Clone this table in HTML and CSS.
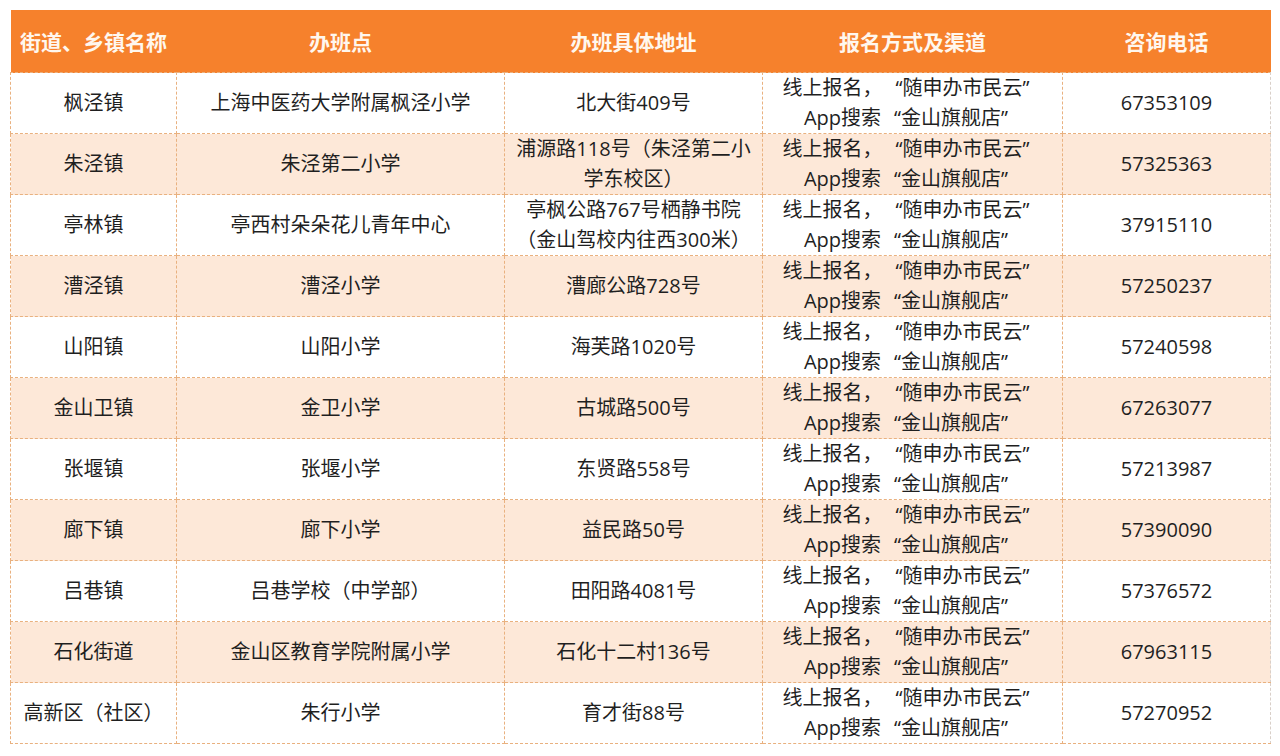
FILE: index.html
```html
<!DOCTYPE html>
<html lang="zh">
<head>
<meta charset="utf-8">
<link rel="stylesheet" href="styles.css">
</head>
<body>
<table class="tbl">
  <colgroup>
    <col class="c1"><col class="c2"><col class="c3"><col class="c4"><col class="c5">
  </colgroup>
  <thead>
    <tr><th>街道、乡镇名称</th><th>办班点</th><th>办班具体地址</th><th>报名方式及渠道</th><th>咨询电话</th></tr>
  </thead>
  <tbody>
    <tr><td>枫泾镇</td><td>上海中医药大学附属枫泾小学</td><td>北大街409号</td><td>线上报名，<span class="ql">“</span>随申办市民云<span class="qr">”</span><br>App搜索<span class="ql">“</span>金山旗舰店<span class="qr">”</span></td><td>67353109</td></tr>
    <tr class="alt"><td>朱泾镇</td><td>朱泾第二小学</td><td>浦源路118号（朱泾第二小<br>学东校区）</td><td>线上报名，<span class="ql">“</span>随申办市民云<span class="qr">”</span><br>App搜索<span class="ql">“</span>金山旗舰店<span class="qr">”</span></td><td>57325363</td></tr>
    <tr><td>亭林镇</td><td>亭西村朵朵花儿青年中心</td><td>亭枫公路767号栖静书院<br>（金山驾校内往西300米）</td><td>线上报名，<span class="ql">“</span>随申办市民云<span class="qr">”</span><br>App搜索<span class="ql">“</span>金山旗舰店<span class="qr">”</span></td><td>37915110</td></tr>
    <tr class="alt"><td>漕泾镇</td><td>漕泾小学</td><td>漕廊公路728号</td><td>线上报名，<span class="ql">“</span>随申办市民云<span class="qr">”</span><br>App搜索<span class="ql">“</span>金山旗舰店<span class="qr">”</span></td><td>57250237</td></tr>
    <tr><td>山阳镇</td><td>山阳小学</td><td>海芙路1020号</td><td>线上报名，<span class="ql">“</span>随申办市民云<span class="qr">”</span><br>App搜索<span class="ql">“</span>金山旗舰店<span class="qr">”</span></td><td>57240598</td></tr>
    <tr class="alt"><td>金山卫镇</td><td>金卫小学</td><td>古城路500号</td><td>线上报名，<span class="ql">“</span>随申办市民云<span class="qr">”</span><br>App搜索<span class="ql">“</span>金山旗舰店<span class="qr">”</span></td><td>67263077</td></tr>
    <tr><td>张堰镇</td><td>张堰小学</td><td>东贤路558号</td><td>线上报名，<span class="ql">“</span>随申办市民云<span class="qr">”</span><br>App搜索<span class="ql">“</span>金山旗舰店<span class="qr">”</span></td><td>57213987</td></tr>
    <tr class="alt"><td>廊下镇</td><td>廊下小学</td><td>益民路50号</td><td>线上报名，<span class="ql">“</span>随申办市民云<span class="qr">”</span><br>App搜索<span class="ql">“</span>金山旗舰店<span class="qr">”</span></td><td>57390090</td></tr>
    <tr><td>吕巷镇</td><td>吕巷学校（中学部）</td><td>田阳路4081号</td><td>线上报名，<span class="ql">“</span>随申办市民云<span class="qr">”</span><br>App搜索<span class="ql">“</span>金山旗舰店<span class="qr">”</span></td><td>57376572</td></tr>
    <tr class="alt"><td>石化街道</td><td>金山区教育学院附属小学</td><td>石化十二村136号</td><td>线上报名，<span class="ql">“</span>随申办市民云<span class="qr">”</span><br>App搜索<span class="ql">“</span>金山旗舰店<span class="qr">”</span></td><td>67963115</td></tr>
    <tr><td>高新区（社区）</td><td>朱行小学</td><td>育才街88号</td><td>线上报名，<span class="ql">“</span>随申办市民云<span class="qr">”</span><br>App搜索<span class="ql">“</span>金山旗舰店<span class="qr">”</span></td><td>57270952</td></tr>
  </tbody>
</table>
</body>
</html>
```
FILE: styles.css
```css
html, body {
  margin: 0;
  padding: 0;
  background: #ffffff;
}
body {
  padding: 10px 10px 0 10px;
  font-family: "Open Sans", "Noto Sans CJK SC", sans-serif;
}
.tbl {
  width: 1260px;
  border-collapse: collapse;
  table-layout: fixed;
}
.c1 { width: 166px; }
.c2 { width: 328px; }
.c3 { width: 258px; }
.c4 { width: 300px; }
.c5 { width: 208px; }
.tbl th {
  background: #f6812c;
  color: #fff7ee;
  font-size: 21px;
  font-weight: 700;
  height: 62px;
  padding: 0;
  text-align: center;
  border: none;
}
.tbl td {
  height: 60px;
  padding: 0 2px;
  text-align: center;
  vertical-align: middle;
  font-size: 20px;
  line-height: 30px;
  color: #1f1f1f;
  border: 1px dashed #e9b17f;
}
.tbl tr.alt td {
  background: #fde8d8;
}
.tbl td:last-child {
  border-right-color: #d9cfc8;
}
.ql, .qr {
  display: inline-block;
  width: 1em;
}
.ql {
  text-align: right;
}
.qr {
  text-align: left;
}
```
